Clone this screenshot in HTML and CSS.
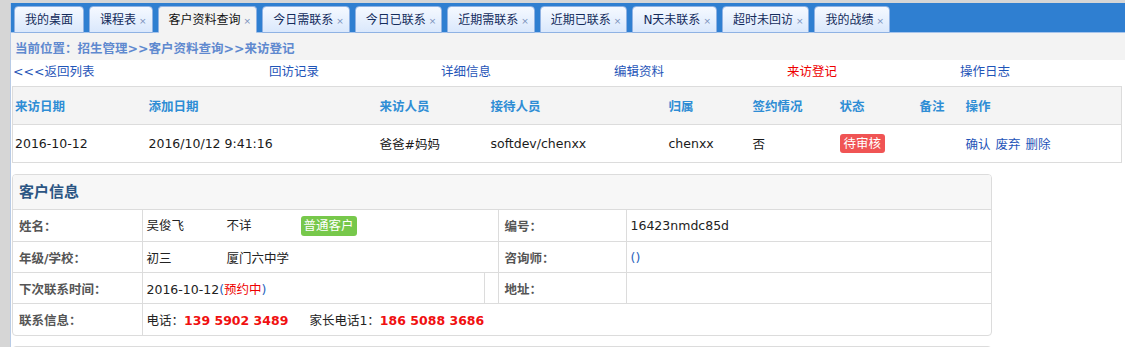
FILE: index.html
```html
<!DOCTYPE html>
<html lang="zh-CN">
<head>
    <meta charset="UTF-8">
    <title>来访登记</title>
    <link rel="stylesheet" href="styles.css">
</head>
<body>
    <div class="frame">
        <div class="tabbar">
            <div class="tab plain">我的桌面</div>
            <div class="tab">课程表<span class="close">×</span></div>
            <div class="tab active">客户资料查询<span class="close">×</span></div>
            <div class="tab">今日需联系<span class="close">×</span></div>
            <div class="tab">今日已联系<span class="close">×</span></div>
            <div class="tab">近期需联系<span class="close">×</span></div>
            <div class="tab">近期已联系<span class="close">×</span></div>
            <div class="tab">N天未联系<span class="close">×</span></div>
            <div class="tab">超时未回访<span class="close">×</span></div>
            <div class="tab">我的战绩<span class="close">×</span></div>
        </div>

        <div class="crumbs">当前位置：招生管理&gt;&gt;客户资料查询&gt;&gt;来访登记</div>

        <div class="subnav">
            <a href="#">&lt;&lt;&lt;返回列表</a>
            <a href="#">回访记录</a>
            <a href="#">详细信息</a>
            <a href="#">编辑资料</a>
            <a href="#" class="current">来访登记</a>
            <a href="#">操作日志</a>
        </div>

        <table class="visits">
            <colgroup>
                <col style="width:134px"><col style="width:231px"><col style="width:111px">
                <col style="width:178px"><col style="width:84px"><col style="width:87px">
                <col style="width:80px"><col style="width:46px"><col>
            </colgroup>
            <thead>
                <tr>
                    <th>来访日期</th><th>添加日期</th><th>来访人员</th><th>接待人员</th>
                    <th>归属</th><th>签约情况</th><th>状态</th><th>备注</th><th>操作</th>
                </tr>
            </thead>
            <tbody>
                <tr>
                    <td>2016-10-12</td>
                    <td>2016/10/12 9:41:16</td>
                    <td>爸爸#妈妈</td>
                    <td>softdev/chenxx</td>
                    <td>chenxx</td>
                    <td>否</td>
                    <td><span class="badge red">待审核</span></td>
                    <td></td>
                    <td class="ops"><a href="#">确认</a> <a href="#">废弃</a> <a href="#">删除</a></td>
                </tr>
            </tbody>
        </table>

        <div class="panel">
            <div class="panel-head">客户信息</div>
            <table class="info">
                <colgroup>
                    <col style="width:129px"><col style="width:342px"><col style="width:14px">
                    <col style="width:128px"><col>
                </colgroup>
                <tr>
                    <td class="label">姓名：</td>
                    <td colspan="2"><span class="cell-a">吴俊飞</span><span class="cell-b">不详</span><span class="badge green">普通客户</span></td>
                    <td class="label">编号：</td>
                    <td>16423nmdc85d</td>
                </tr>
                <tr>
                    <td class="label">年级/学校：</td>
                    <td colspan="2"><span class="cell-a">初三</span><span class="cell-b">厦门六中学</span></td>
                    <td class="label">咨询师：</td>
                    <td class="paren">()</td>
                </tr>
                <tr>
                    <td class="label">下次联系时间：</td>
                    <td>2016-10-12<span class="paren">(</span><span class="warn">预约中</span><span class="paren">)</span></td>
                    <td></td>
                    <td class="label">地址：</td>
                    <td></td>
                </tr>
                <tr>
                    <td class="label">联系信息：</td>
                    <td colspan="4">电话：<b class="phone">139 5902 3489</b><span class="parent-tel">家长电话1：</span><b class="phone">186 5088 3686</b></td>
                </tr>
            </table>
        </div>

        <div class="panel next"></div>
    </div>
</body>
</html>
```

FILE: styles.css
```css
body {
    margin: 0;
    background: #d6d6d6;
    font-family: "DejaVu Sans", "Noto Sans CJK SC", sans-serif;
    font-size: 12.5px;
    color: #222;
}

a {
    color: #1f55b8;
    text-decoration: none;
}

.frame {
    margin: 3px 0 0 10px;
    border-left: 1px solid #b8cbe6;
    background: #fff;
    height: 344px;
    overflow: hidden;
}

/* tab strip */
.tabbar {
    display: flex;
    align-items: flex-end;
    gap: 5px;
    height: 29px;
    padding-left: 3px;
    background: #2f7fd1;
    border-bottom: 1px solid #a6c4ec;
}

.tab {
    box-sizing: border-box;
    height: 27px;
    margin-bottom: -1px;
    padding: 0 5px 0 10px;
    line-height: 26px;
    border: 1px solid #8fb2e3;
    border-radius: 4px 4px 0 0;
    background: linear-gradient(#f5f9ff, #dae8fc);
    color: #142c5c;
    font-size: 12px;
    white-space: nowrap;
}

.tab.plain {
    padding-right: 10px;
}

.tab.active {
    background: #f3f3f3;
    border-bottom-color: #f3f3f3;
    color: #111;
}

.close {
    margin-left: 3px;
    font-size: 9px;
    color: #7990bb;
}

.crumbs {
    height: 25px;
    padding: 2px 0 0 4px;
    line-height: 28px;
    background: #f3f3f3;
    color: #5f89cf;
    font-weight: bold;
}

.subnav {
    display: grid;
    grid-template-columns: 256px 172px 173px 173px 173px auto;
    height: 26px;
    padding-left: 2px;
    line-height: 24px;
}

.subnav .current {
    color: #ee0000;
}

/* visit records */
.visits {
    margin-left: 1px;
    width: 1110px;
    border: 1px solid #dcdcdc;
    border-collapse: collapse;
    table-layout: fixed;
}

.visits th,
.visits td {
    height: 37px;
    padding: 0 0 0 2px;
    text-align: left;
    border-bottom: 1px solid #dcdcdc;
    white-space: nowrap;
}

.visits th {
    background: #f4f4f4;
    color: #2e8dd5;
    font-weight: bold;
}

.visits td {
    color: #1a1a1a;
}

.ops a {
    margin-right: 1px;
}

.badge {
    display: inline-block;
    padding: 0 4px;
    line-height: 19px;
    border-radius: 3px;
    color: #fff;
}

.badge.red {
    background: #f05454;
}

.badge.green {
    padding: 0 3px;
    line-height: 20px;
    background: #77c84b;
}

/* customer panel */
.panel {
    width: 978px;
    margin: 11px 0 0 1px;
    border: 1px solid #dcdcdc;
    border-radius: 4px;
    overflow: hidden;
}

.panel-head {
    height: 34px;
    padding-left: 6px;
    line-height: 34px;
    background: #f7f7f7;
    color: #2b5583;
    font-size: 15px;
    font-weight: bold;
}

.info {
    width: 100%;
    border-collapse: collapse;
    table-layout: fixed;
}

.info td {
    height: 30px;
    padding: 0 4px;
    border-top: 1px solid #dcdcdc;
    border-left: 1px solid #dcdcdc;
    white-space: nowrap;
}

.info tr:first-child td,
.info tr:last-child td {
    height: 31px;
}

.info td:first-child {
    border-left: none;
}

.info .label {
    padding-left: 6px;
    color: #555;
    font-weight: bold;
}

.cell-a {
    display: inline-block;
    width: 80px;
}

.cell-b {
    display: inline-block;
    width: 74px;
}

.paren {
    color: #2a62bd;
}

.warn {
    color: #e00;
}

.phone {
    color: #f01010;
}

.parent-tel {
    margin-left: 21px;
}

.panel.next {
    height: 40px;
    margin-top: 10px;
}
```
